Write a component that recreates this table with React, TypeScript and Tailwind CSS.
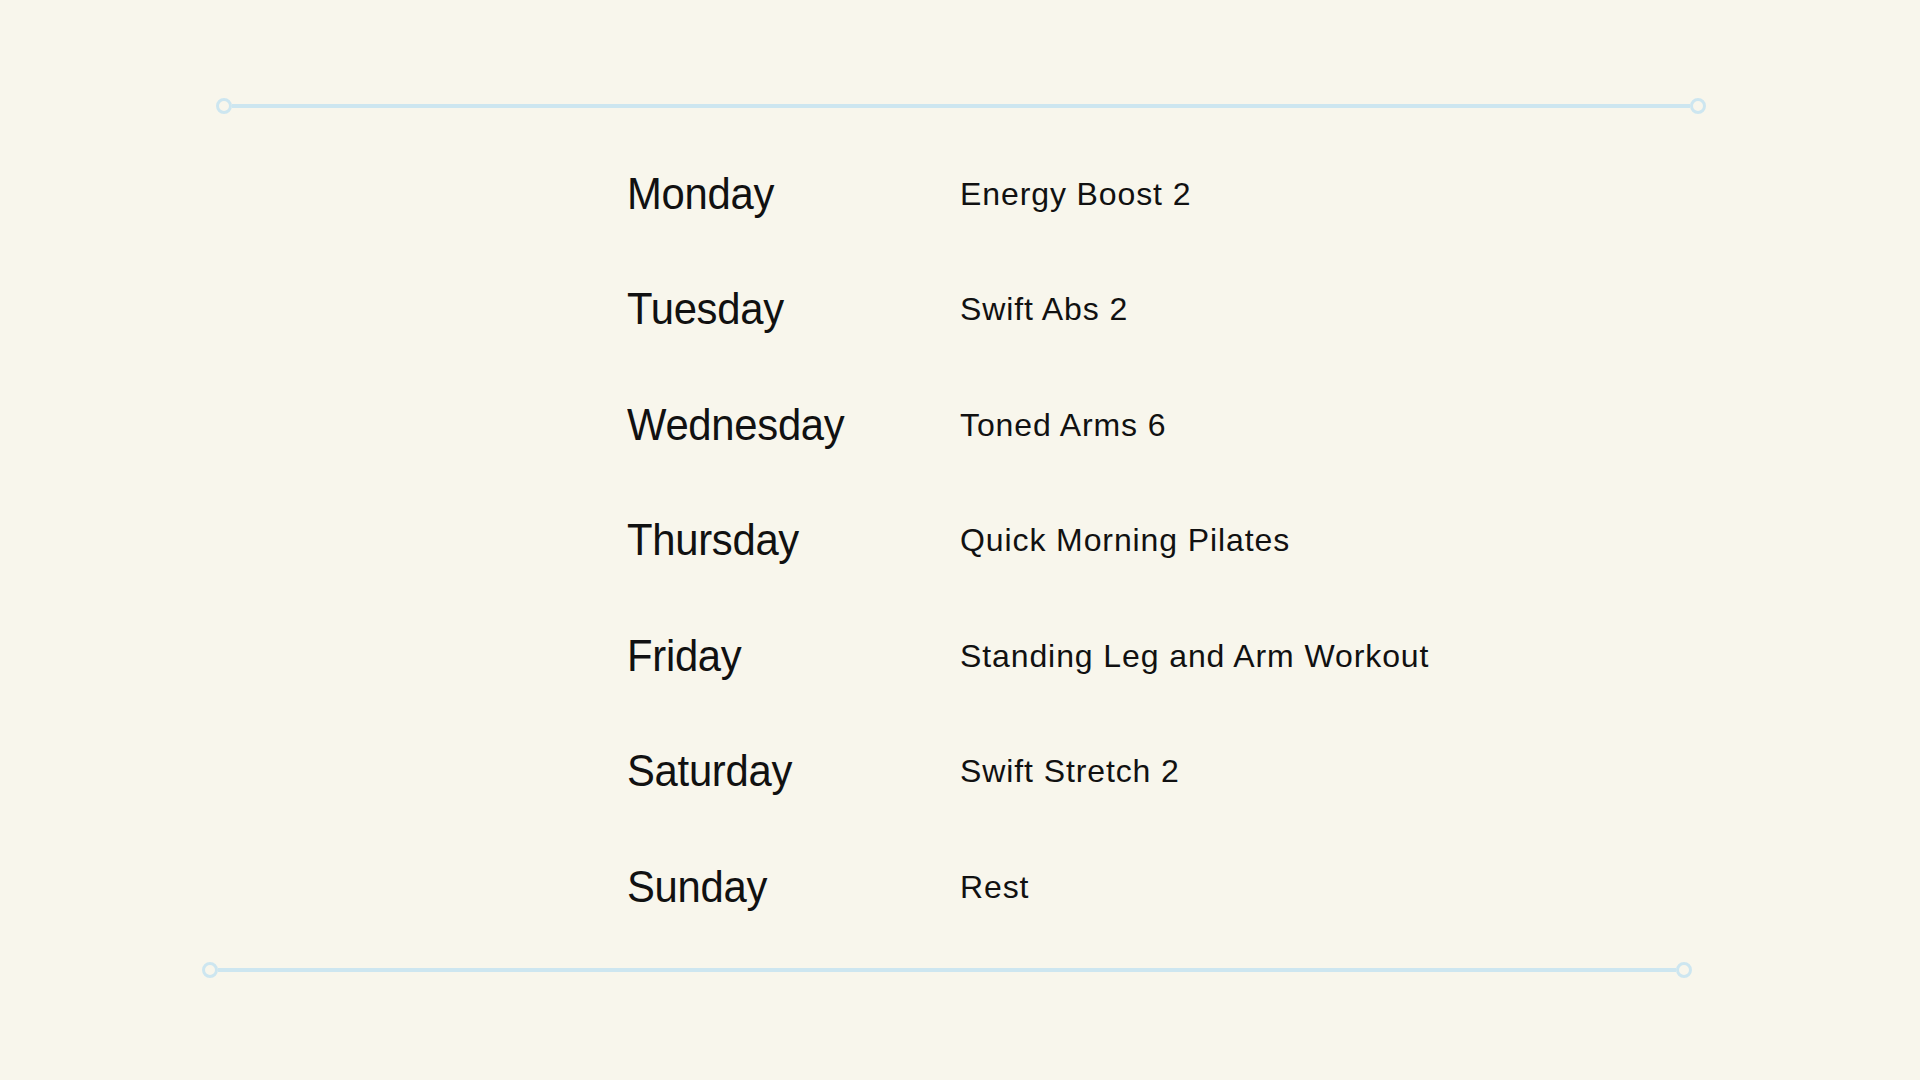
import React from "react";

const rows: [string, string][] = [
  ["Monday", "Energy Boost 2"],
  ["Tuesday", "Swift Abs 2"],
  ["Wednesday", "Toned Arms 6"],
  ["Thursday", "Quick Morning Pilates"],
  ["Friday", "Standing Leg and Arm Workout"],
  ["Saturday", "Swift Stretch 2"],
  ["Sunday", "Rest"],
];

function Rule({ className }: { className: string }) {
  return (
    <div className={`flex items-center w-[1490px] h-[16px] ${className}`}>
      <div className="w-[16px] h-[16px] rounded-full border-[3.5px] border-[#cde6f0] bg-[#f8f6ec] shrink-0" />
      <div className="flex-1 h-[4px] bg-[#cde6f0]" />
      <div className="w-[16px] h-[16px] rounded-full border-[3.5px] border-[#cde6f0] bg-[#f8f6ec] shrink-0" />
    </div>
  );
}

export default function App() {
  return (
    <div
      className="w-[1920px] h-[1080px] bg-[#f8f6ec] text-[#111111] pt-[98px] overflow-hidden"
      style={{ fontFamily: '"Liberation Sans", Arial, sans-serif' }}
    >
      <Rule className="ml-[216px]" />
      <div className="ml-[627px] mt-[22px] flex flex-col">
        {rows.map(([day, workout]) => (
          <div key={day} className="flex items-center h-[115.5px]">
            <div className="w-[333px]">
              <div className="text-[44px] leading-[44px] tracking-[-0.3px] origin-left scale-x-[0.95]">{day}</div>
            </div>
            <div className="text-[32px] leading-[32px] tracking-[0.9px]">{workout}</div>
          </div>
        ))}
      </div>
      <Rule className="ml-[202px] mt-[17.5px]" />
    </div>
  );
}
